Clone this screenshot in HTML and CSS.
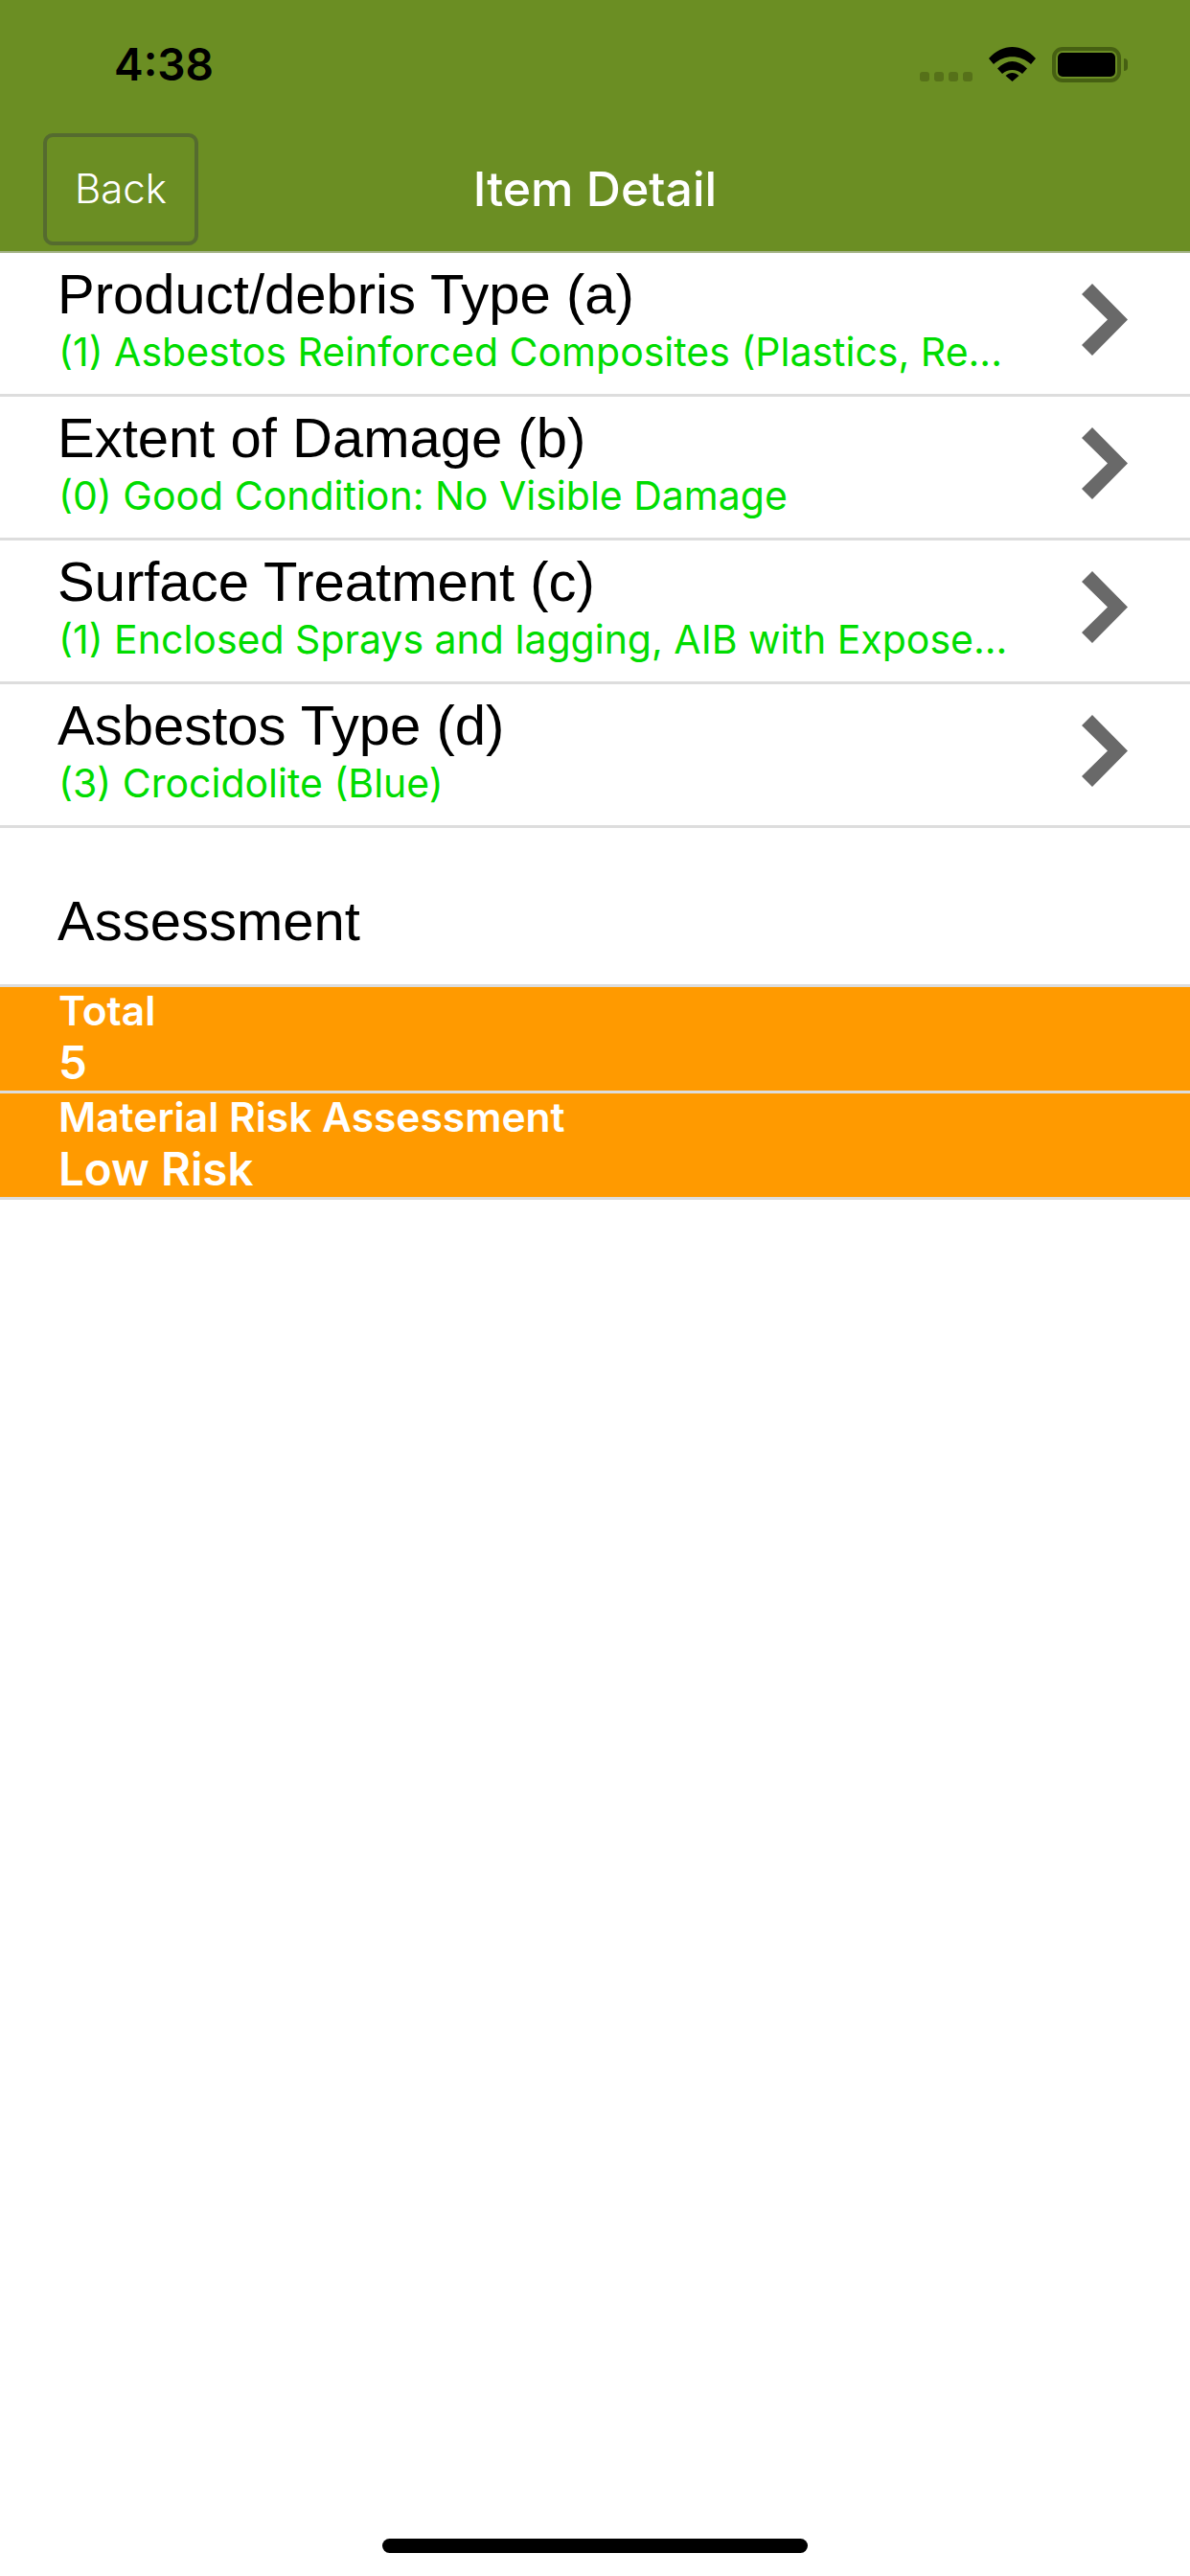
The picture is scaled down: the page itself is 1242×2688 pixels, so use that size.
FILE: index.html
```html
<!DOCTYPE html>
<html lang="en">

<head>
    <meta charset="UTF-8">
    <meta name="viewport" content="width=device-width, initial-scale=1.0">
    <title>Item Detail</title>
    <link rel="stylesheet" href="styles.css">
</head>

<body>
    <div class="page">
        <div class="header">
            <div class="status-bar">
                <span class="clock">4:38</span>
                <div class="status-icons">
                    <div class="signal">
                        <span></span><span></span><span></span><span></span>
                    </div>
                    <svg class="wifi" viewBox="0 0 49 36">
                        <path d="M0 12 L5 18 C16 7.500 33 7.500 44 18 L49 12 C35 -4 14 -4 0 12Z"/>
                        <path d="M9 22.500 L14 28 C20 22.500 29 22.500 35 28 L40 22.500 C30 12.500 19 12.500 9 22.500Z"/>
                        <path d="M17.500 30 L24.500 36 L31.500 30 C27 26 22 26 17.500 30Z"/>
                    </svg>
                    <div class="battery">
                        <div class="battery-body"><div class="battery-fill"></div></div>
                        <div class="battery-cap"></div>
                    </div>
                </div>
            </div>
            <div class="nav-bar">
                <button class="back-button">Back</button>
                <h1>Item Detail</h1>
            </div>
        </div>

        <div class="item">
            <div class="item-text">
                <div class="item-title">Product/debris Type (a)</div>
                <div class="item-value">(1) Asbestos Reinforced Composites (Plastics, Re...</div>
            </div>
            <svg class="chevron" viewBox="0 0 48 75"><path d="M0 11 L11 0 L48 37.500 L11 75 L0 64 L27 37.500Z"/></svg>
        </div>
        <div class="item">
            <div class="item-text">
                <div class="item-title">Extent of Damage (b)</div>
                <div class="item-value">(0) Good Condition: No Visible Damage</div>
            </div>
            <svg class="chevron" viewBox="0 0 48 75"><path d="M0 11 L11 0 L48 37.500 L11 75 L0 64 L27 37.500Z"/></svg>
        </div>
        <div class="item">
            <div class="item-text">
                <div class="item-title">Surface Treatment (c)</div>
                <div class="item-value">(1) Enclosed Sprays and lagging, AIB with Expose...</div>
            </div>
            <svg class="chevron" viewBox="0 0 48 75"><path d="M0 11 L11 0 L48 37.500 L11 75 L0 64 L27 37.500Z"/></svg>
        </div>
        <div class="item">
            <div class="item-text">
                <div class="item-title">Asbestos Type (d)</div>
                <div class="item-value">(3) Crocidolite (Blue)</div>
            </div>
            <svg class="chevron" viewBox="0 0 48 75"><path d="M0 11 L11 0 L48 37.500 L11 75 L0 64 L27 37.500Z"/></svg>
        </div>

        <div class="section-title">Assessment</div>

        <div class="result">
            <div class="result-label">Total</div>
            <div class="result-value">5</div>
        </div>
        <div class="result">
            <div class="result-label">Material Risk Assessment</div>
            <div class="result-value">Low Risk</div>
        </div>

        <div class="home-area"><div class="home-bar"></div></div>
    </div>
</body>

</html>
```

FILE: styles.css
```css
* {
    box-sizing: border-box;
}

body {
    margin: 0;
    background-color: #fff;
    font-family: "Inter", "Liberation Sans", sans-serif;
}

.page {
    display: flex;
    flex-direction: column;
    height: 2688px;
}

.header {
    height: 264px;
    background-color: #6b8e23;
    border-bottom: 2px solid #a6b58a;
}

.status-bar {
    display: flex;
    align-items: center;
    justify-content: space-between;
    height: 134px;
    padding: 0 65px 0 119px;
}

.clock {
    font-size: 46px;
    font-weight: 600;
    color: #000;
}

.status-icons {
    display: flex;
    align-items: center;
    gap: 17px;
}

.signal {
    display: flex;
    gap: 5px;
    margin-top: 26px;
}

.signal span {
    width: 10px;
    height: 10px;
    border-radius: 3px;
    background-color: #567119;
}

.wifi {
    width: 49px;
    height: 36px;
    fill: #000;
}

.battery {
    display: flex;
    align-items: center;
}

.battery-body {
    width: 72px;
    height: 37px;
    padding: 2px;
    border: 4px solid #466012;
    border-radius: 11px;
}

.battery-fill {
    height: 100%;
    background-color: #000;
    border-radius: 5px;
}

.battery-cap {
    width: 4px;
    height: 13px;
    margin-left: 3px;
    border-radius: 0 5px 5px 0;
    background-color: #466012;
}

.nav-bar {
    position: relative;
    display: flex;
    align-items: center;
    justify-content: center;
    height: 128px;
}

.nav-bar h1 {
    margin: -2px 0 0;
    font-size: 50px;
    font-weight: 500;
    color: #fff;
}

.back-button {
    position: absolute;
    left: 45px;
    top: 5px;
    width: 162px;
    height: 117px;
    background: none;
    border: 4px solid #556b2f;
    border-radius: 10px;
    font-family: inherit;
    font-size: 42px;
    font-weight: 300;
    color: #fff;
    padding: 0 0 2px;
}

.item {
    display: flex;
    align-items: center;
    height: 150px;
    padding: 0 65px 0 60px;
    border-bottom: 3px solid #ddd;
}

.item-text {
    flex: 1;
    min-width: 0;
}

.item-title {
    font-family: "Liberation Sans", sans-serif;
    font-size: 58px;
    line-height: 60px;
    margin-top: -7px;
    color: #000;
}

.item-value {
    font-size: 41px;
    line-height: 50px;
    margin-top: 5px;
    padding-left: 1px;
    color: #00dc00;
    white-space: nowrap;
}

.chevron {
    width: 48px;
    height: 75px;
    margin-bottom: 8px;
    fill: #696969;
}

.section-title {
    display: flex;
    align-items: center;
    height: 166px;
    padding: 30px 0 0 60px;
    font-family: "Liberation Sans", sans-serif;
    font-size: 58px;
    border-bottom: 3px solid #ddd;
    color: #000;
}

.result {
    height: 111px;
    padding-left: 61px;
    background-color: #ff9a00;
    border-bottom: 3px solid #ddd;
    color: #fff;
    font-weight: 600;
}

.result-label {
    font-size: 42.500px;
    line-height: 50px;
}

.result-value {
    font-size: 47.500px;
    line-height: 58px;
}

.home-area {
    display: flex;
    align-items: flex-end;
    justify-content: center;
    flex: 1;
    padding-bottom: 24px;
}

.home-bar {
    width: 444px;
    height: 15px;
    border-radius: 8px;
    background-color: #000;
}
```
